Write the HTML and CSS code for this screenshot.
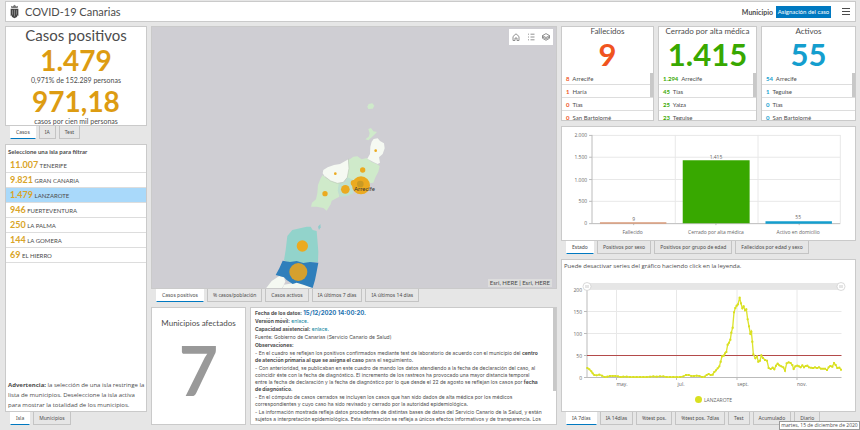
FILE: index.html
```
<!DOCTYPE html>
<html lang="es">
<head>
<meta charset="utf-8">
<title>COVID-19 Canarias</title>
<link rel="stylesheet" href="styles.css">
</head>
<body>
<header class="topbar">
  <svg class="crest" viewBox="0 0 10 16" aria-hidden="true">
    <path d="M1.500 4.200 1 1.600l1.800.8L5 .4l2.200 2L9 1.600l-.5 2.600z" fill="#777"/>
    <path d="M1 5h8v6.500Q8.500 14 5 15.500 1.500 14 1 11.500z" fill="#444"/>
    <path d="M2.800 6.500v5M5 6v7.500M7.200 6.500v5" stroke="#aaa" stroke-width=".7" fill="none"/>
    <path d="M.4 5v8M9.600 5v8" stroke="#999" stroke-width=".7"/>
  </svg>
  <h1>COVID-19 Canarias</h1>
  <span class="mode">Municipio</span>
  <button class="assign" type="button">Asignación del caso</button>
  <button class="burger" type="button" aria-label="Menú"><i></i><i></i><i></i></button>
</header>
<main class="board">
  <div class="col left">
    <section class="panel totals">
      <h2>Casos positivos</h2>
      <strong>1.479</strong>
      <p>0,971% de 152.289 personas</p>
      <strong>971,18</strong>
      <p>casos por cien mil personas</p>
    </section>
    <nav class="tabs"><button class="on">Casos</button><button>IA</button><button>Test</button></nav>
    <section class="panel islands">
      <h3>Seleccione una isla para filtrar</h3>
      <ul>
        <li><b>11.007</b> TENERIFE</li>
        <li><b>9.821</b> GRAN CANARIA</li>
        <li class="sel"><b>1.479</b> LANZAROTE</li>
        <li><b>946</b> FUERTEVENTURA</li>
        <li><b>250</b> LA PALMA</li>
        <li><b>144</b> LA GOMERA</li>
        <li><b>69</b> EL HIERRO</li>
      </ul>
      <p class="warn"><b>Advertencia:</b> la selección de una isla restringe la<br>lista de municipios. Deseleccione la isla activa<br>para mostrar la totalidad de los municipios.</p>
    </section>
    <nav class="tabs"><button class="on">Isla</button><button>Municipios</button></nav>
  </div>

  <div class="col middle">
    <section class="panel map">
      <svg class="fill" viewBox="152 27 404 261" preserveAspectRatio="xMidYMid slice" role="img" aria-label="Mapa de casos por municipio">
        <g transform="translate(260 80) scale(.33333)" stroke-linejoin="round">
          <g fill="#cfeaca">
            <path d="M322 80 326 72 337 70 343 77 338 86 325 87z"/>
            <path d="M325 147 333 144 340 154 351 156 343 164 335 172 325 181 316 178 326 170 329 160z"/>
            <path d="M266 240 280 230 292 229 305 238 320 234 335 246 350 252 359 258 355 275 347 290 340 308 330 310 280 310 262 294z"/>
            <path d="M188 285 197 293 215 304 240 310 234 330 238 350 215 362 212 373 200 392 190 384 170 380 153 380 156 368 168 358 172 340 174 315 182 295z"/>
          </g>
          <path d="M236 312 255 305 262 292 280 300 280 340 262 348 240 350 233 332z" fill="#bfe0d0"/>
          <g fill="#f5f9f2">
            <path d="M341 177 353 175 360 183 372 190 374 205 368 222 357 232 360 248 353 252 340 246 322 236 330 222 331 200 335 185z"/>
            <path d="M190 270 203 262 222 255 240 252 256 243 265 238 267 265 262 292 250 307 232 310 212 303 195 290 188 280z"/>
            <path d="M18 625 35 603 58 588 72 592 76 605 66 625zM68 625 72 614 98 610 110 606 130 613 160 625z"/>
          </g>
          <path d="M265 236 267 265 262 292 250 307 232 310 212 303 195 290" fill="none" stroke="#b9c9b5" stroke-width="2"/>
          <path d="M174 440 181 432 182 442 177 450z" fill="#8fcbcb"/>
          <path d="M82 468 97 450 120 445 140 440 152 440 158 450 170 453 173 490 175 515 174 546 150 548 130 550 110 545 90 548 72 541 77 510z" fill="#92d3cb"/>
          <path d="M68 542 90 546 110 543 130 549 150 546 175 548 170 575 165 600 158 624 130 614 110 608 98 612 80 600 72 592 47 585 58 565z" fill="#2f7fbb"/>
          <g fill="#ebaa20">
            <circle cx="226" cy="281" r="4"/><circle cx="347" cy="212" r="4"/>
            <circle cx="308" cy="270" r="8"/><circle cx="195" cy="341" r="8"/>
            <circle cx="256" cy="328" r="13"/><circle cx="281" cy="309" r="9"/>
            <circle cx="303" cy="316" r="27"/><circle cx="127" cy="498" r="17"/>
          </g>
          <circle cx="115" cy="576" r="27" fill="#d5a02e"/>
          <circle cx="301" cy="312" r="10" fill="#c99a24"/>
        </g>
        <text class="place" x="354" y="191">Arrecife</text>
      </svg>
      <div class="tools">
        <button aria-label="Inicio"><svg viewBox="0 0 8 8"><path d="M1 7.500V3.500L4 .8l3 2.700v4H5V5H3v2.500z"/></svg></button>
        <button aria-label="Leyenda"><svg viewBox="0 0 8 8"><path d="M1 1.200h1M3.500 1.200h4M1 4h1M3.500 4h4M1 6.800h1M3.500 6.800h4"/></svg></button>
        <button aria-label="Capas"><svg viewBox="0 0 8 8"><path d="M4 .6l3.500 2L4 4.600l-3.500-2zM.5 2.600v2.700l3.500 2 3.500-2V2.600M.5 4l3.500 2 3.500-2"/></svg></button>
      </div>
      <small class="credit">Esri, HERE | Esri, HERE</small>
    </section>
    <nav class="tabs"><button class="on">Casos positivos</button><button>% casos/población</button><button>Casos activos</button><button>IA últimos 7 días</button><button>IA últimos 14 días</button></nav>
    <div class="lower">
      <section class="panel affected"><h2>Municipios afectados</h2><strong>7</strong></section>
      <section class="panel notes">
        <div class="meta"><b>Fecha de los datos: <em>15/12/2020 14:00:20.</em></b></div>
        <div class="meta"><b>Versión móvil:</b> <a href="#">enlace.</a></div>
        <div class="meta"><b>Capacidad asistencial:</b> <a href="#">enlace.</a></div>
        <div class="meta">Fuente: Gobierno de Canarias (Servicio Canario de Salud)</div>
        <div class="meta"><b>Observaciones:</b></div>
        <p>- En el cuadro se reflejan los positivos confirmados mediante test de laboratorio de acuerdo con el municipio del <b>centro<br>de atención primaria al que se asigna el caso</b> para el seguimiento.</p>
        <p>- Con anterioridad, se publicaban en este cuadro de mando los datos atendiendo a la fecha de declaración del caso, al<br>coincidir éste con la fecha de diagnóstico. El incremento de los rastreos ha provocado una mayor distancia temporal<br>entre la fecha de declaración y la fecha de diagnóstico por lo que desde el 22 de agosto se reflejan los casos por <b>fecha<br>de diagnóstico</b>.</p>
        <p>- En el cómputo de casos cerrados se incluyen los casos que han sido dados de alta médica por los médicos<br>correspondientes y cuyo caso ha sido revisado y cerrado por la autoridad epidemiológica.</p>
        <p>- La información mostrada refleja datos procedentes de distintas bases de datos del Servicio Canario de la Salud, y están<br>sujetos a interpretación epidemiológica. Esta información se refleja a únicos efectos informativos y de transparencia. Los</p>
        <i class="thumb"></i>
      </section>
    </div>
  </div>

  <div class="col right">
    <div class="kpis">
      <section class="panel kpi dead"><h2>Fallecidos</h2><strong>9</strong>
        <ul><li><b>8</b>  Arrecife</li><li><b>1</b>  Haría</li><li><b>0</b>  Tías</li><li><b>0</b>  San Bartolomé</li></ul><i class="thumb"></i></section>
      <section class="panel kpi closed"><h2>Cerrado por alta médica</h2><strong>1.415</strong>
        <ul><li><b>1.294</b>  Arrecife</li><li><b>45</b>  Tías</li><li><b>25</b>  Yaiza</li><li><b>23</b>  Teguise</li></ul><i class="thumb"></i></section>
      <section class="panel kpi active"><h2>Activos</h2><strong>55</strong>
        <ul><li><b>54</b>  Arrecife</li><li><b>1</b>  Teguise</li><li><b>0</b>  Tías</li><li><b>0</b>  San Bartolomé</li></ul><i class="thumb"></i></section>
    </div>
    <section class="panel bars">
      <svg class="fill chart" viewBox="562 127 293 114" role="img" aria-label="Casos por estado">
        <path class="grid" d="M591 135.500H841.500M591 157.500H841.500M591 180H841.500M591 202H841.500M675 135V224M758.500 135V224M841.500 135V224"/>
        <path class="axis" d="M591 135V224.500H841.500M588 135.500h3M588 157.500h3M588 180h3M588 202h3M588 224.500h3M633 224v2M716 224v2M800 224v2"/>
        <path d="M599 223h67v1.500h-67z" fill="#d99a78"/>
        <path d="M682.500 160.500H750V224h-67.500z" fill="#38a800"/>
        <path d="M766 222h67v2.500h-67z" fill="#149ece"/>
        <g text-anchor="end"><text x="586" y="137">2.000</text><text x="586" y="159">1.500</text><text x="586" y="182">1.000</text><text x="586" y="204">500</text><text x="586" y="226">0</text></g>
        <g text-anchor="middle"><text x="633" y="222">9</text><text x="716" y="159">1.415</text><text x="799" y="220">55</text><text x="632" y="235">Fallecido</text><text x="716" y="235">Cerrado por alta médica</text><text x="799" y="235">Activo en domicilio</text></g>
      </svg>
    </section>
    <nav class="tabs"><button class="on">Estado</button><button>Positivos por sexo</button><button>Positivos por grupo de edad</button><button>Fallecidos por edad y sexo</button></nav>
    <section class="panel trend">
      <p>Puede desactivar series del gráfico haciendo click en la leyenda.</p>
      <svg class="chart" viewBox="562 275 293 136" role="img" aria-label="IA 7 días en Lanzarote">
        <defs><marker id="dot" markerUnits="userSpaceOnUse" markerWidth="8" markerHeight="8" refX="4" refY="4"><circle cx="4" cy="4" r="3.500" fill="#d9e021"/></marker></defs>
        <path d="M587 283H841.500V290H587z" fill="#e6e6e6"/>
        <path class="grid" d="M587 289.500H841.500M587 311.500H841.500M587 333.500H841.500M616.500 290V377M676.500 290V377M737 290V377M797 290V377"/>
        <path class="axis" d="M587 290V377.500H841.500M584 311.500h3M584 333.500h3M584 355.500h3M584 377.500h3M616.500 377v3M676.500 377v3M737 377v3M797 377v3"/>
        <g fill="#fff" stroke="#ccc" stroke-width=".7"><circle cx="587" cy="286.500" r="4"/><circle cx="841" cy="286.500" r="4"/></g>
        <path d="M586 285v3M588 285v3M840 285v3M842 285v3" stroke="#aaa" stroke-width=".6"/>
        <path d="M587 355H841.500V356H587z" fill="#b34a4a"/>
        <g transform="translate(560 255) scale(.33333)">
          <polyline class="series" points="82,339 88,343 94,349 98,355 103,360 110,361 118,359 126,362 134,366 142,365 150,363 158,363 166,363 174,364 182,366 190,365 200,365 210,366 220,366 230,366 240,366 250,366 260,366 270,365 280,364 290,365 300,364 310,364 320,366 330,366 340,366 350,366 360,366 370,364 378,360 386,360 394,363 402,363 410,362 418,363 426,366 434,365 440,360 446,357 452,360 458,359 463,351 468,346 473,340 478,334 482,320 486,304 491,302 495,295 499,291 503,269 507,263 511,254 514,233 518,218 522,172 526,159 530,152 534,148 539,128 543,145 547,160 551,154 555,166 559,163 563,193 567,214 571,236 574,230 577,260 580,298 586,310 591,304 595,320 600,317 604,301 609,309 615,315 621,317 626,339 632,342 638,338 643,343 648,332 653,326 658,331 664,334 670,337 675,347 680,325 686,322 692,324 697,330 701,342 706,334 712,332 717,334 722,337 727,331 732,337 737,333 742,332 747,337 753,338 759,339 765,337 771,339 777,337 783,341 789,341 795,341 801,345 806,337 811,333 817,335 822,324 827,330 832,339 838,338 843,344"/>
        </g>
        <g text-anchor="end"><text x="582" y="292">200</text><text x="582" y="314">150</text><text x="582" y="336">100</text><text x="582" y="358">50</text><text x="582" y="380">0</text></g>
        <g text-anchor="middle"><text x="622" y="386">may.</text><text x="681" y="386">jul.</text><text x="743" y="386">sept.</text><text x="802" y="386">nov.</text></g>
        <circle cx="698.500" cy="399.500" r="3.500" fill="#d9e021"/><text x="704" y="402">LANZAROTE</text>
      </svg>
    </section>
    <nav class="tabs"><button class="on">IA 7días</button><button>IA 14días</button><button>%test pos.</button><button>%test pos. 7días</button><button>Test</button><button>Acumulado</button><button>Diario</button></nav>
  </div>
</main>
<div class="tip">martes, 15 de diciembre de 2020</div>
</body>
</html>
```
FILE: styles.css
```
* { box-sizing: border-box; margin: 0; padding: 0; }
body {
  display: flex;
  flex-direction: column;
  height: 100vh;
  padding: 1px 4px 5px 5px;
  gap: 4px;
  overflow: hidden;
  background: #e6e6e6;
  color: #4c4c4c;
  font: 6px/8px Lato, "Liberation Sans", sans-serif;
}
button { font: inherit; color: inherit; border: 0; background: none; }
ul { list-style: none; }
.topbar, .panel { background: #fff; border: 1px solid #cacaca; }
.topbar { display: flex; align-items: center; height: 21px; flex: none; padding: 0 5px 0 4px; }
.crest { width: 9px; height: 15px; margin-right: 6px; }
h1 { font-size: 11px; font-weight: 400; margin-right: auto; }
.mode { font-size: 7px; font-weight: 700; margin-right: 3px; }
.assign { width: 55px; height: 12px; background: #0079c1; color: #fff; font-size: 6px; }
.burger { display: grid; gap: 2px; width: 8px; margin: 0 0 0 11px; }
.burger i { height: 1px; background: #4c4c4c; }

.board { flex: 1; min-height: 0; display: grid; grid-template-columns: 142fr 406fr 295fr; gap: 4px; }
.col { display: flex; flex-direction: column; min-width: 0; min-height: 0; }
.panel { position: relative; overflow: hidden; min-width: 0; min-height: 0; }
.fill { display: block; width: 100%; height: 100%; }
h2 { font-weight: 400; }

.tabs { display: flex; gap: 3px; height: 13px; flex: none; padding-left: 5px; margin-bottom: 5px; }
.tabs:last-child { margin-bottom: 0; }
.tabs button { padding: 0 5px; border: 1px solid #c4c4c4; border-top: 0; font-family: "Noto Sans", sans-serif; font-size: 5px; white-space: nowrap; }
.tabs .on { background: #fff; border-color: #fff; border-bottom: 1px solid #0079c1; }

.totals { flex: 98; text-align: center; }
.totals h2 { font-size: 15px; line-height: 17px; }
.totals strong { display: block; font-size: 28px; line-height: 32px; color: #dd9c12; }
.totals p { font-size: 7px; line-height: 9px; }
.islands { flex: 266; display: flex; flex-direction: column; }
.islands h3 { font-size: 6px; line-height: 13px; padding-left: 2px; }
.islands li { height: 15px; line-height: 14px; padding-left: 4px; border-bottom: 1px solid #ddd; }
.islands li b { font-size: 9px; color: #d9a428; }
.islands .sel { background: #a9d9fa; }
.warn { margin-top: auto; padding: 0 2px 1px; font-family: "Open Sans", sans-serif; line-height: 10px; white-space: nowrap; }

.map { flex: 261; background: #cfced3; }
.place { font-size: 6px; fill: #333; }
.tools { position: absolute; top: 2px; right: 3px; display: flex; width: 44px; height: 16px; background: #fff; }
.tools button { flex: 1; display: grid; place-items: center; }
.tools svg { width: 8px; height: 8px; fill: none; stroke: #777; stroke-width: .8; }
.credit { position: absolute; right: 4px; bottom: 1px; padding: 0 2px; background: #ddd; font-size: 6px; }
.lower { flex: 118; min-height: 0; display: grid; grid-template-columns: 95fr 307fr; grid-template-rows: minmax(0, 1fr); gap: 4px; }
.affected { text-align: center; padding-top: 9px; }
.affected h2 { font-size: 8px; line-height: 12px; }
.affected strong { display: block; font-size: 68px; line-height: 82px; color: #999; }
.notes { padding: 1px 3px 0 4px; font-family: Inter, sans-serif; font-size: 5px; line-height: 7px; white-space: nowrap; }
.meta { line-height: 8px; }
.notes p { margin-top: 1px; }
.notes em { font-size: 6px; font-style: normal; color: #1f74b1; }
.notes a { color: #0a7f9b; text-decoration: none; }
.thumb { position: absolute; right: 0; width: 3px; background: #c8c8c8; }
.notes .thumb { top: 0; height: 83px; }

.kpis { flex: 95; min-height: 0; display: grid; grid-template-columns: 93fr 99fr 95fr; grid-template-rows: minmax(0, 1fr); gap: 4px; margin-bottom: 5px; }
.kpi { text-align: center; }
.kpi h2 { font-size: 8px; line-height: 9px; white-space: nowrap; }
.kpi strong { display: block; font-size: 31px; line-height: 36px; }
.kpi ul { text-align: left; }
.kpi li { height: 13px; line-height: 13px; padding-left: 4px; border-bottom: 1px solid #ddd; white-space: pre; }
.kpi li:last-child { border: 0; }
.kpi .thumb { top: 46px; height: 24px; }
.dead strong, .dead b { color: #f0541e; }
.closed strong, .closed b { color: #38a800; }
.active strong, .active b { color: #149ece; }
.bars { flex: 113; }
.trend { flex: 151; display: flex; flex-direction: column; }
.trend p { height: 15px; flex: none; font-family: "Open Sans", sans-serif; line-height: 12px; padding-left: 2px; }
.trend svg { flex: 1; min-height: 0; width: 100%; }
.chart text { font-family: "Open Sans", sans-serif; font-size: 5px; fill: #666; }
.grid { stroke: #e8e8e8; stroke-width: 1; fill: none; }
.axis { stroke: #bbb; stroke-width: 1; fill: none; }
.series { fill: none; stroke: #dce32e; stroke-width: 4; marker-start: url(#dot); marker-mid: url(#dot); marker-end: url(#dot); }
.tip { position: absolute; right: 0; bottom: 0; width: 81px; height: 9px; border: 1px solid #999; background: #fff; font-family: "Open Sans", sans-serif; font-size: 5px; line-height: 7px; text-align: center; white-space: nowrap; }
```
